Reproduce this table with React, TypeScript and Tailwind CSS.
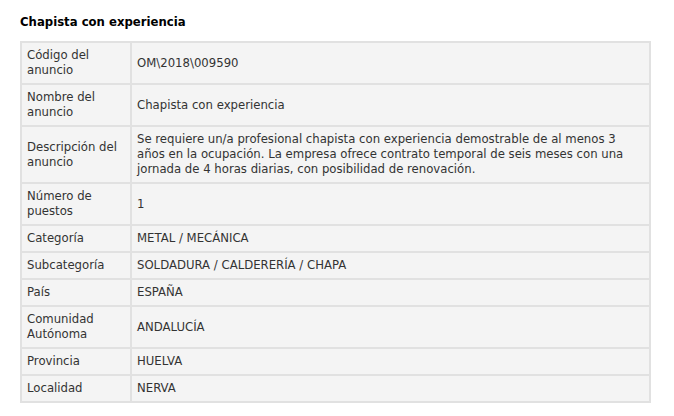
const rows: { label: string; value: string }[] = [
  { label: 'Código del anuncio', value: 'OM\\2018\\009590' },
  { label: 'Nombre del anuncio', value: 'Chapista con experiencia' },
  {
    label: 'Descripción del anuncio',
    value:
      'Se requiere un/a profesional chapista con experiencia demostrable de al menos 3 años en la ocupación. La empresa ofrece contrato temporal de seis meses con una jornada de 4 horas diarias, con posibilidad de renovación.',
  },
  { label: 'Número de puestos', value: '1' },
  { label: 'Categoría', value: 'METAL / MECÁNICA' },
  { label: 'Subcategoría', value: 'SOLDADURA / CALDERERÍA / CHAPA' },
  { label: 'País', value: 'ESPAÑA' },
  { label: 'Comunidad Autónoma', value: 'ANDALUCÍA' },
  { label: 'Provincia', value: 'HUELVA' },
  { label: 'Localidad', value: 'NERVA' },
];

const App = () => {
  return (
    <div
      className="min-h-screen bg-white px-[20px] pt-[14px] text-[#333]"
      style={{ fontFamily: '"DejaVu Sans", Verdana, sans-serif' }}
    >
      <h1 className="mb-[11px] text-[11.7px] font-bold leading-[16px] text-black">
        Chapista con experiencia
      </h1>

      <table className="w-[631px] border-separate border-spacing-[2px] bg-[#e1e1e1] text-[11.7px] leading-[15px]">
        <tbody>
          {rows.map((row) => (
            <tr key={row.label}>
              <td className="w-[108px] bg-[#f4f4f4] p-[5px] align-middle">{row.label}</td>
              <td className="bg-[#f4f4f4] p-[5px] align-middle">{row.value}</td>
            </tr>
          ))}
        </tbody>
      </table>
    </div>
  );
};

export default App;
